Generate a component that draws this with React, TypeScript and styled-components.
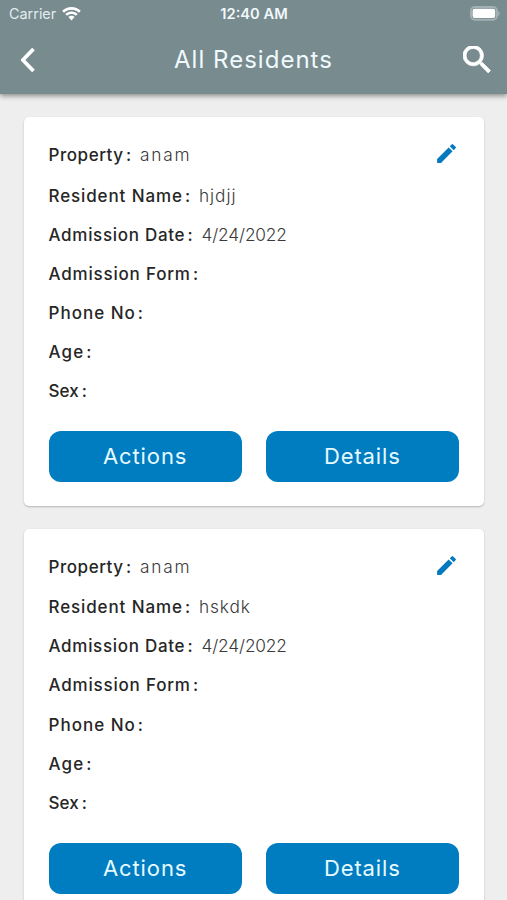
import React from 'react';
import styled, { createGlobalStyle } from 'styled-components';

const GlobalStyle = createGlobalStyle`
  * { box-sizing: border-box; }
  html, body { margin: 0; padding: 0; }
  body {
    background: #eeeeee;
    font-family: Inter, sans-serif;
    -webkit-font-smoothing: antialiased;
  }
`;

const Screen = styled.div`
  display: flex;
  flex-direction: column;
  width: 100%;
  height: 900px;
  overflow: hidden;
  background: #eeeeee;
`;

const Header = styled.header`
  flex: none;
  height: 93.5px;
  background: #788b8f;
  color: #fff;
  box-shadow: 0 2px 5px rgba(0, 0, 0, 0.42);
  z-index: 1;
`;

const StatusBar = styled.div`
  display: grid;
  grid-template-columns: 1fr auto 1fr;
  align-items: center;
  height: 27px;
  padding: 0 7px 0 9px;
`;

const Carrier = styled.div`
  display: flex;
  align-items: center;
  gap: 6px;
  font-size: 14.4px;
  color: #e3ebee;
`;

const Clock = styled.div`
  font-size: 14.7px;
  font-weight: 600;
  margin: 1px 1px 0 0;
  color: #f1f8fb;
`;

const BatterySlot = styled.div`
  display: flex;
  justify-content: flex-end;
`;

const NavBar = styled.div`
  display: grid;
  grid-template-columns: 1fr auto 1fr;
  align-items: center;
  height: 65px;
  padding: 0 16px 0 20px;
`;

const Title = styled.h1`
  margin: 0 4px 0 0;
  font-size: 24px;
  font-weight: 400;
  line-height: 30px;
  letter-spacing: 1.02px;
  color: #f0fafd;
`;

const IconButton = styled.button<{ $align: 'start' | 'end' }>`
  display: flex;
  justify-self: ${(p) => p.$align};
  padding: 0;
  border: 0;
  background: none;
  color: inherit;
`;

const CardList = styled.main`
  display: flex;
  flex-direction: column;
  gap: 23px;
  padding: 23.7px 23.5px 0 24px;
`;

const Card = styled.article`
  flex: none;
  height: 388.7px;
  padding: 16.8px 24.5px 24px 24.5px;
  border-radius: 5px;
  background: #fff;
  box-shadow: 0 1px 2px rgba(0, 0, 0, 0.24);
`;

const Row = styled.div<{ $lead?: boolean }>`
  display: flex;
  align-items: center;
  height: ${(p) => (p.$lead ? 42 : 39.1)}px;
  font-size: 17px;
  line-height: 24px;
`;

const Label = styled.span<{ $tracking: number }>`
  font-weight: 500;
  letter-spacing: ${(p) => p.$tracking}px;
  margin-right: ${(p) => -p.$tracking}px;
  color: #262626;
`;

const Colon = styled.span`
  margin-left: 3px;
  font-weight: 500;
  color: #262626;
`;

const Value = styled.span<{ $tracking: number }>`
  margin-left: 8.8px;
  font-size: 17.3px;
  font-weight: 300;
  letter-spacing: ${(p) => p.$tracking}px;
  color: #3a3a3a;
`;

const EditButton = styled.button`
  display: flex;
  margin: -3px 0 0 auto;
  padding: 0;
  border: 0;
  background: none;
  color: #0479bd;
`;

const Buttons = styled.div`
  display: grid;
  grid-template-columns: 1fr 1fr;
  gap: 24px;
  margin-top: 20.6px;
`;

const ActionButton = styled.button`
  height: 51px;
  padding: 0 0 1px;
  border: 0;
  border-radius: 12px;
  background: #007cc0;
  color: #e6faff;
  font: 400 22px/28px Inter, sans-serif;
  letter-spacing: 0.9px;
`;

type Text = { text: string; tracking: number };
type Field = { label: Text; value?: Text };

const detailFields: Field[] = [
  { label: { text: 'Admission Date', tracking: 0.7 }, value: { text: '4/24/2022', tracking: -0.15 } },
  { label: { text: 'Admission Form', tracking: 0.8 } },
  { label: { text: 'Phone No', tracking: 1 } },
  { label: { text: 'Age', tracking: 1.2 } },
  { label: { text: 'Sex', tracking: 0.1 } },
];

const residents: { property: Text; name: Text }[] = [
  { property: { text: 'anam', tracking: 1.8 }, name: { text: 'hjdjj', tracking: 1 } },
  { property: { text: 'anam', tracking: 1.8 }, name: { text: 'hskdk', tracking: 0.9 } },
];

const WifiIcon = () => (
  <svg width="19" height="14" viewBox="0 0 19 14" fill="#fff">
    <path d="M9.5 0C5.9 0 2.6 1.4.2 3.8L2 5.7C4 3.8 6.600 2.700 9.500 2.700S15 3.800 17 5.700L18.800 3.800C16.400 1.400 13.100 0 9.500 0Z" />
    <path d="M9.500 4.500C7.100 4.500 4.900 5.400 3.300 7L5.100 8.800C6.300 7.700 7.800 7.100 9.500 7.100S12.700 7.700 13.900 8.800L15.700 7C14.100 5.400 11.900 4.500 9.500 4.500Z" />
    <path d="M9.500 8.800C8.300 8.800 7.200 9.300 6.400 10.100L9.500 13.400L12.600 10.100C11.800 9.300 10.700 8.800 9.500 8.800Z" />
  </svg>
);

const BatteryIcon = () => (
  <svg width="30" height="15" viewBox="0 0 30 15">
    <rect x="1" y="1" width="26" height="12.800" rx="4" fill="none" stroke="#a3b0b4" strokeWidth="2" />
    <rect x="2.600" y="2.700" width="22.600" height="9.400" rx="2" fill="#fff" />
    <path d="M28.300 5v4.800c1-.4 1.500-1.300 1.500-2.400S29.300 5.400 28.300 5Z" fill="#a3b0b4" />
  </svg>
);

const BackIcon = () => (
  <svg width="16" height="26" viewBox="0 0 16 26" fill="none" stroke="#fff" strokeWidth="3.800">
    <path d="M13.500 2 2.800 13l10.700 11" strokeLinejoin="round" />
  </svg>
);

const SearchIcon = () => (
  <svg width="28" height="28" viewBox="3 3.400 17.800 17.800" fill="#fff" stroke="#fff" strokeWidth="0.500">
    <path d="M15.500 14h-.79l-.28-.27A6.471 6.471 0 0 0 16 9.500 6.500 6.500 0 1 0 9.500 16c1.610 0 3.090-.59 4.230-1.570l.27.28v.79l5 4.990L20.490 19l-4.990-5zm-6 0C7.010 14 5 11.990 5 9.500S7.010 5 9.500 5 14 7.010 14 9.500 11.990 14 9.500 14z" />
  </svg>
);

const PencilIcon = () => (
  <svg width="25" height="25" viewBox="0 0 24 24" fill="currentColor">
    <path d="M3 17.250V21h3.750L17.810 9.940l-3.750-3.750L3 17.250zM20.710 7.040a.996.996 0 0 0 0-1.410l-2.340-2.340a.996.996 0 0 0-1.410 0l-1.830 1.830 3.750 3.750 1.830-1.830z" />
  </svg>
);

const FieldRow = ({ label, value, lead, children }: Field & { lead?: boolean; children?: React.ReactNode }) => (
  <Row $lead={lead}>
    <Label $tracking={label.tracking}>{label.text}</Label>
    <Colon>:</Colon>
    {value && <Value $tracking={value.tracking}>{value.text}</Value>}
    {children}
  </Row>
);

export default function App() {
  return (
    <>
      <GlobalStyle />
      <Screen>
        <Header>
          <StatusBar>
            <Carrier>
              Carrier
              <WifiIcon />
            </Carrier>
            <Clock>12:40 AM</Clock>
            <BatterySlot>
              <BatteryIcon />
            </BatterySlot>
          </StatusBar>
          <NavBar>
            <IconButton $align="start" aria-label="Back">
              <BackIcon />
            </IconButton>
            <Title>All Residents</Title>
            <IconButton $align="end" aria-label="Search">
              <SearchIcon />
            </IconButton>
          </NavBar>
        </Header>
        <CardList>
          {residents.map((resident) => (
            <Card key={resident.name.text}>
              <FieldRow lead label={{ text: 'Property', tracking: 0.55 }} value={resident.property}>
                <EditButton aria-label="Edit">
                  <PencilIcon />
                </EditButton>
              </FieldRow>
              <FieldRow label={{ text: 'Resident Name', tracking: 0.88 }} value={resident.name} />
              {detailFields.map((field) => (
                <FieldRow key={field.label.text} {...field} />
              ))}
              <Buttons>
                <ActionButton>Actions</ActionButton>
                <ActionButton>Details</ActionButton>
              </Buttons>
            </Card>
          ))}
        </CardList>
      </Screen>
    </>
  );
}
